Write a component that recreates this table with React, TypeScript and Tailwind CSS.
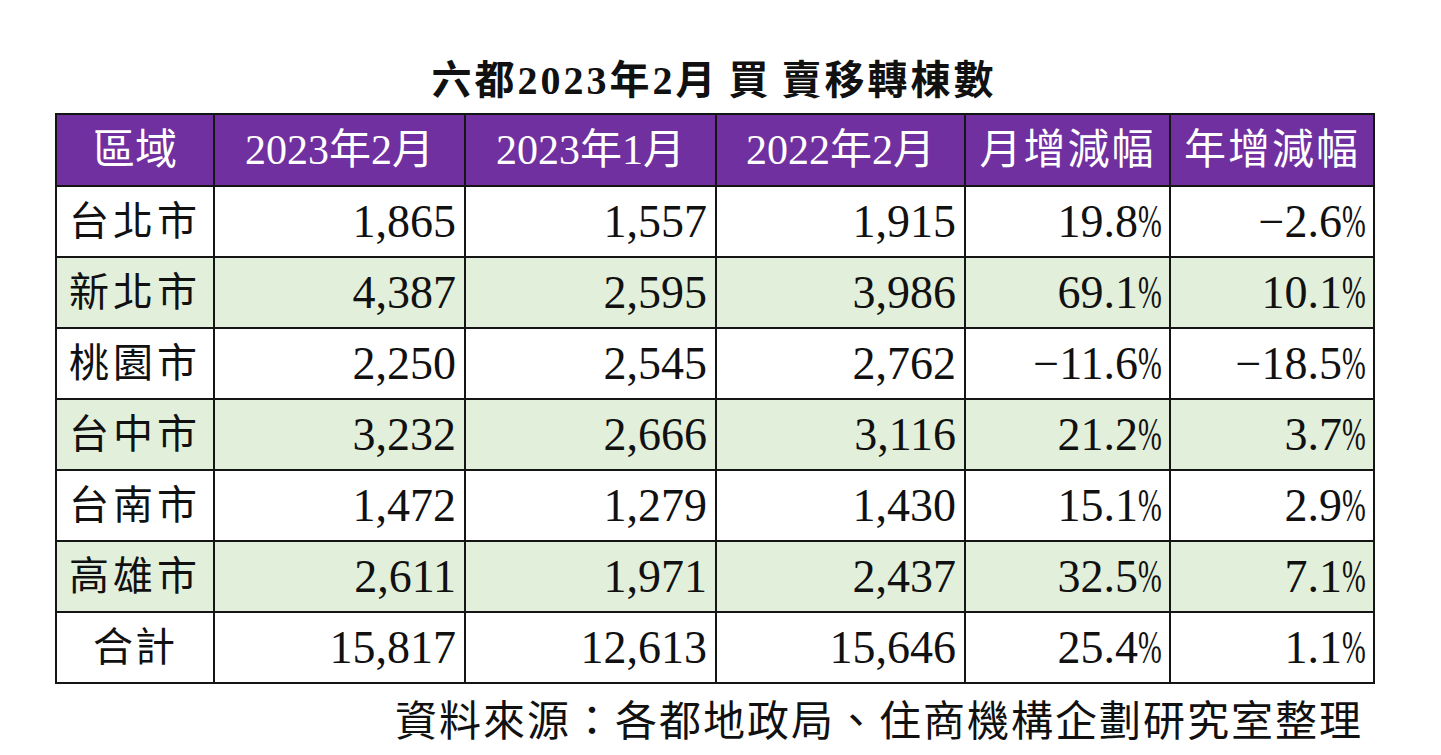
import React from 'react';

const font = { fontFamily: "'Liberation Serif', 'Noto Sans CJK TC', serif" };

interface Row {
  area: string;
  feb23: string;
  jan23: string;
  feb22: string;
  mom: string;
  yoy: string;
}

const rows: Row[] = [
  { area: '台北市', feb23: '1,865', jan23: '1,557', feb22: '1,915', mom: '19.8', yoy: '−2.6' },
  { area: '新北市', feb23: '4,387', jan23: '2,595', feb22: '3,986', mom: '69.1', yoy: '10.1' },
  { area: '桃園市', feb23: '2,250', jan23: '2,545', feb22: '2,762', mom: '−11.6', yoy: '−18.5' },
  { area: '台中市', feb23: '3,232', jan23: '2,666', feb22: '3,116', mom: '21.2', yoy: '3.7' },
  { area: '台南市', feb23: '1,472', jan23: '1,279', feb22: '1,430', mom: '15.1', yoy: '2.9' },
  { area: '高雄市', feb23: '2,611', jan23: '1,971', feb22: '2,437', mom: '32.5', yoy: '7.1' },
  { area: '合計', feb23: '15,817', jan23: '12,613', feb22: '15,646', mom: '25.4', yoy: '1.1' },
];

const headers = ['區域', '2023年2月', '2023年1月', '2022年2月', '月增減幅', '年增減幅'];
const widths = ['w-[158px]', 'w-[251px]', 'w-[251px]', 'w-[249px]', 'w-[205px]', 'w-[204px]'];

function Pct({ value }: { value: string }) {
  return (
    <>
      {value}
      <span className="inline-block w-[25px] text-left">
        <span className="inline-block origin-left scale-x-[0.62]">%</span>
      </span>
    </>
  );
}

export default function App() {
  return (
    <div className="min-h-[755px] w-[1441px] bg-white text-[#111]" style={font}>
      <div className="w-[1318px] ml-[55px] pt-[57px]">
        {/* Title */}
        <h1 className="text-center text-[40px] leading-[48px] font-bold tracking-[3px] mb-[8px]">
          六都2023年2月<span className="ml-[10px]">買</span>
          <span className="ml-[10px]">賣移轉棟數</span>
        </h1>

        {/* Table */}
        <table className="w-[1318px] border-collapse table-fixed border-2 border-[#151515]">
          <thead>
            <tr className="h-[72px] bg-[#7030a0] text-white">
              {headers.map((h, i) => (
                <th
                  key={h}
                  className={`${widths[i]} border-2 border-[#151515] text-[42px] font-normal leading-none text-center ${
                    i >= 4 ? 'tracking-[2px]' : ''
                  }`}
                >
                  {h}
                </th>
              ))}
            </tr>
          </thead>
          <tbody>
            {rows.map((r, idx) => (
              <tr
                key={r.area}
                className={`h-[71px] ${idx % 2 === 1 ? 'bg-[#e2efda]' : 'bg-white'}`}
              >
                <td
                  className={`border-2 border-[#151515] text-center text-[40px] leading-none ${
                    r.area.length === 3 ? 'tracking-[4px]' : 'tracking-[2px]'
                  }`}
                >
                  {r.area}
                </td>
                <td className="border-2 border-[#151515] text-right pr-[8px] text-[46px] leading-none">
                  {r.feb23}
                </td>
                <td className="border-2 border-[#151515] text-right pr-[8px] text-[46px] leading-none">
                  {r.jan23}
                </td>
                <td className="border-2 border-[#151515] text-right pr-[8px] text-[46px] leading-none">
                  {r.feb22}
                </td>
                <td className="border-2 border-[#151515] text-right pr-[6px] text-[46px] leading-none">
                  <Pct value={r.mom} />
                </td>
                <td className="border-2 border-[#151515] text-right pr-[6px] text-[46px] leading-none">
                  <Pct value={r.yoy} />
                </td>
              </tr>
            ))}
          </tbody>
        </table>

        {/* Source note */}
        <p className="mt-[13px] pr-[10px] text-right text-[42px] leading-[50px] tracking-[2px]">
          資料來源：各都地政局、住商機構企劃研究室整理
        </p>
      </div>
    </div>
  );
}
